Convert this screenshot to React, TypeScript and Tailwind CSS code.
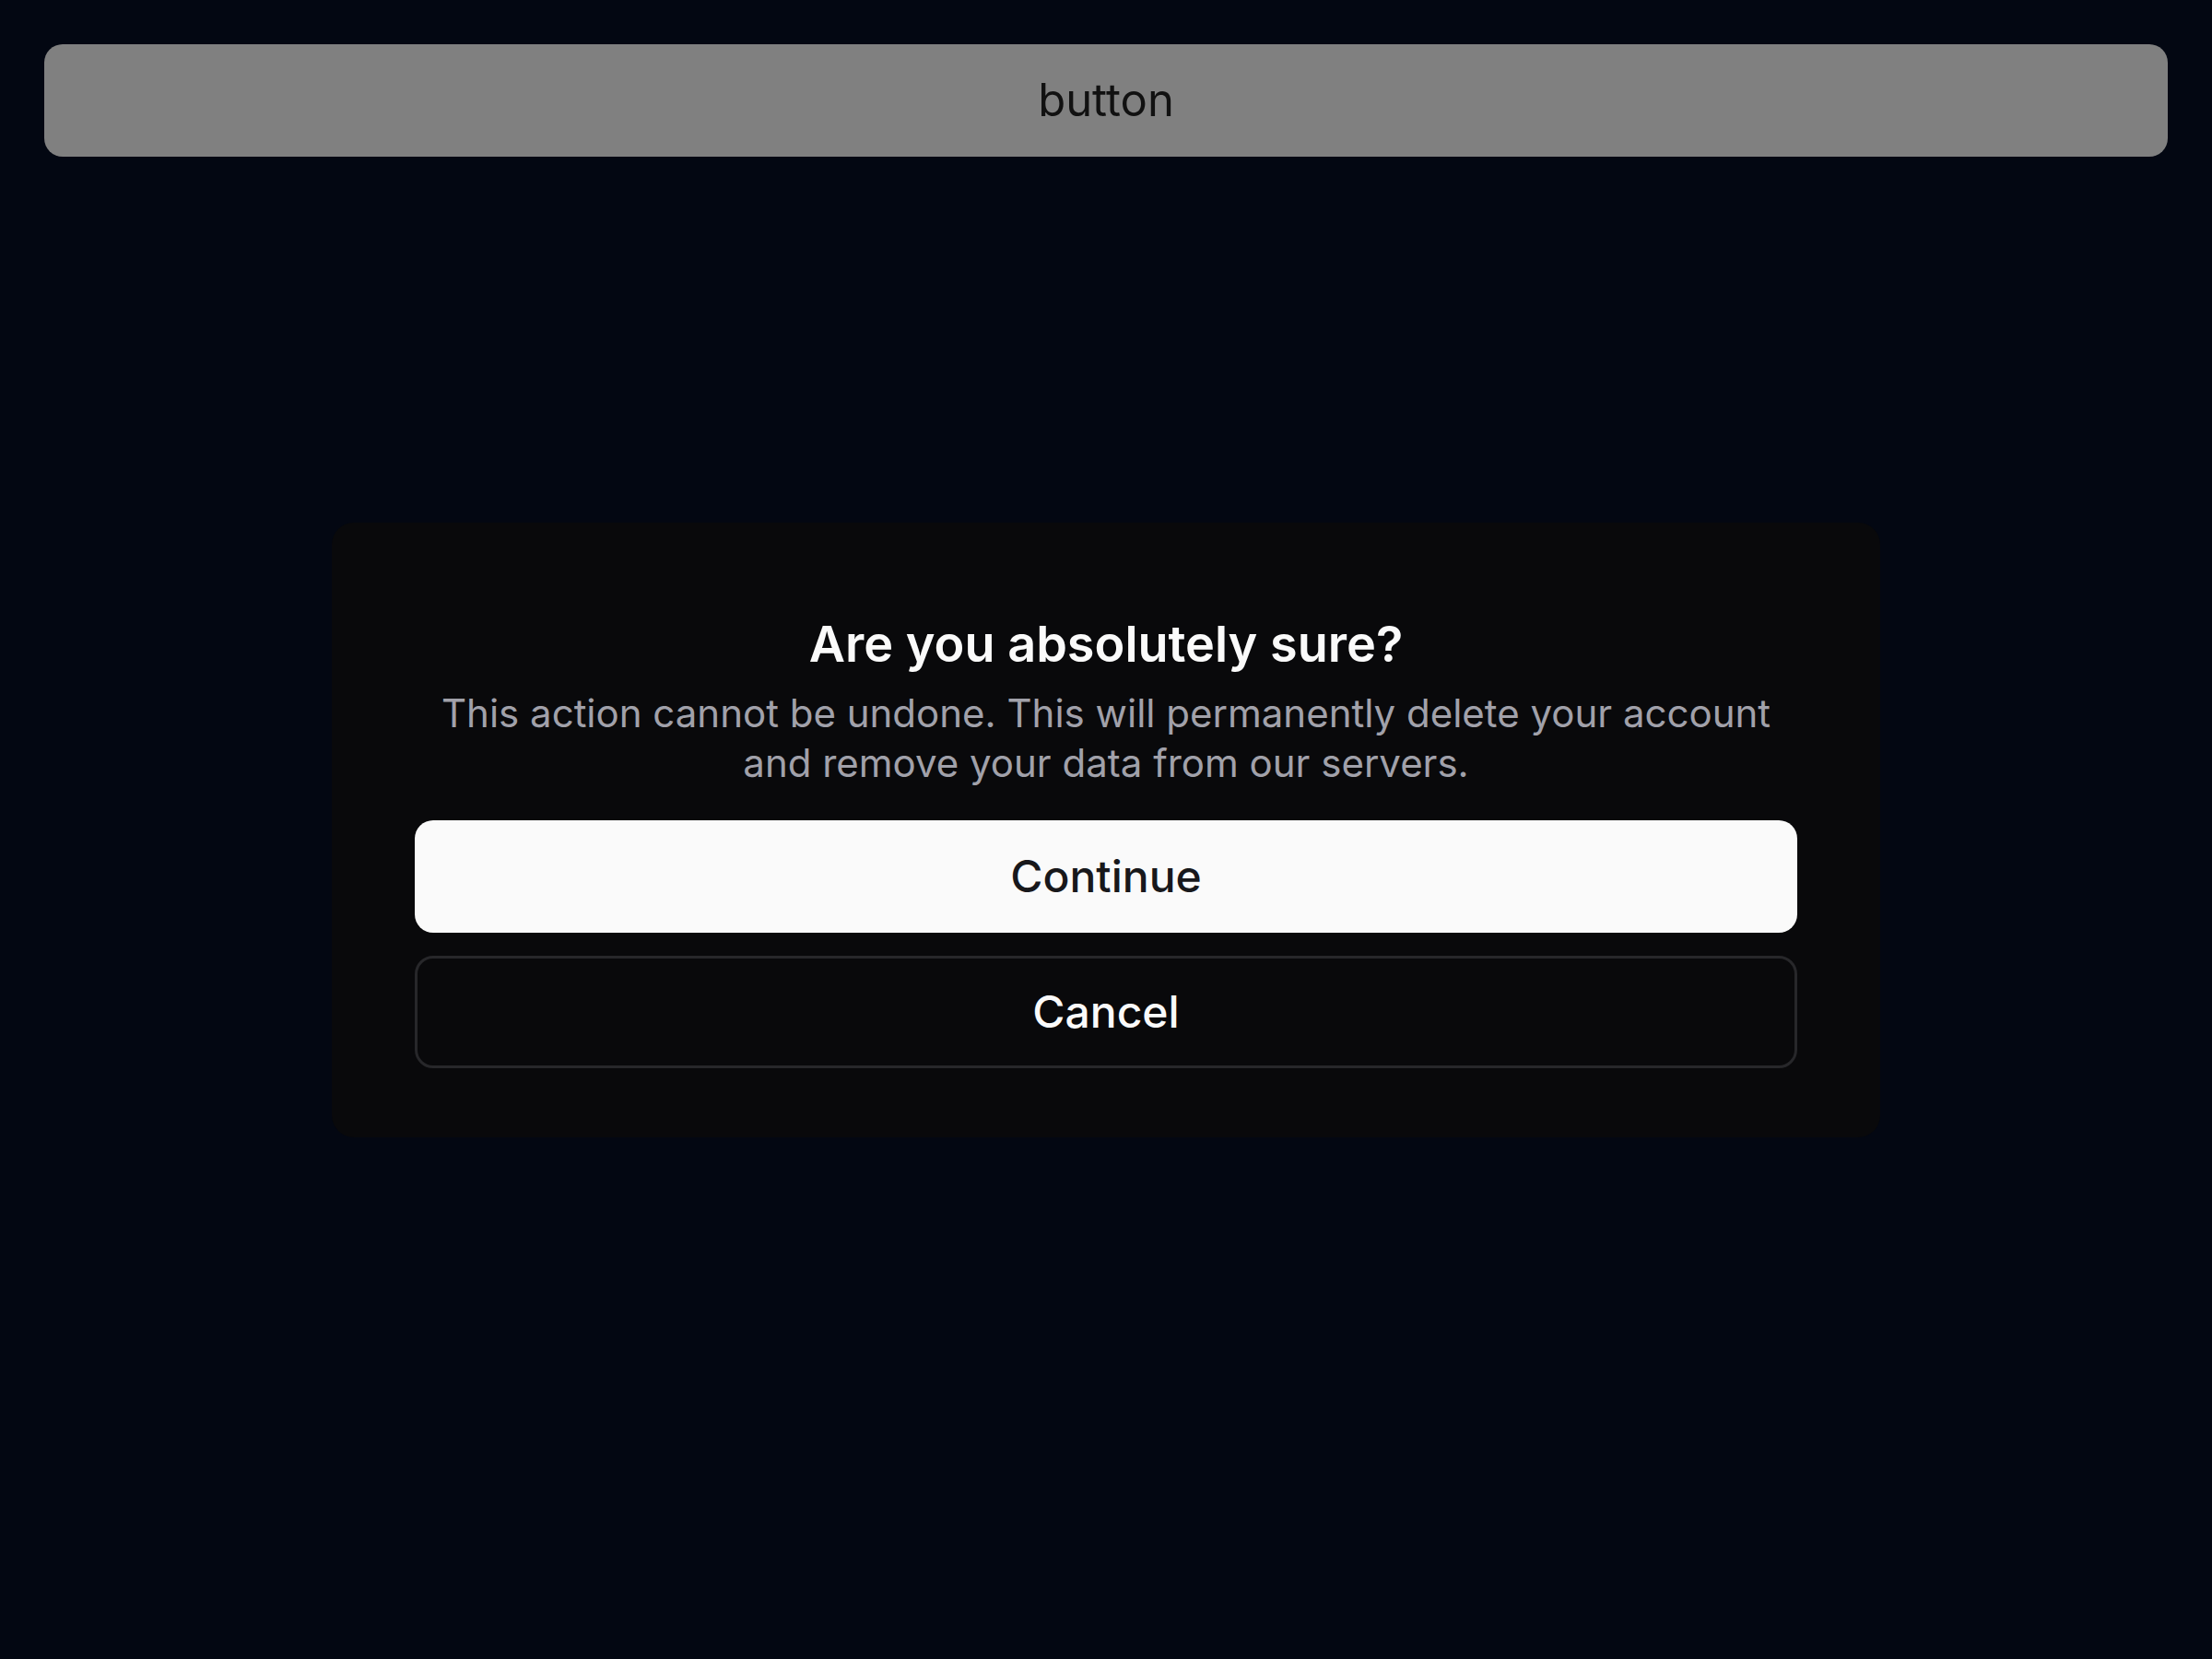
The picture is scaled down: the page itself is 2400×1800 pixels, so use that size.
import { useState } from "react";

function App() {
  const [open, setOpen] = useState(true);

  return (
    <div
      className="relative min-h-screen w-full bg-[#030712] px-[48px] pt-[48px]"
      style={{ fontFamily: "Inter, 'Noto Sans', sans-serif" }}
    >
      <button
        onClick={() => setOpen(true)}
        className="flex h-[122px] w-full items-center justify-center rounded-[20px] bg-[#808080] text-[49px] font-normal text-[#111111]"
      >
        button
      </button>

      {open && (
        <div className="fixed inset-0 flex items-center justify-center">
          <div className="flex w-[1680px] flex-col rounded-[24px] bg-[#09090b] px-[90px] pt-[90px] pb-[75px]">
            <h2 className="text-center text-[54px] leading-[84px] font-semibold text-[#fafafa]">
              Are you absolutely sure?
            </h2>
            <p className="mt-[6px] text-center text-[42px] leading-[54px] text-[#a1a1aa]">
              This action cannot be undone. This will permanently delete your account and remove
              your data from our servers.
            </p>
            <div className="mt-[35px] flex flex-col gap-[25px]">
              <button
                onClick={() => setOpen(false)}
                className="flex h-[122px] w-full items-center justify-center rounded-[20px] bg-[#fafafa] text-[48px] font-medium text-[#18181b]"
              >
                Continue
              </button>
              <button
                onClick={() => setOpen(false)}
                className="flex h-[122px] w-full items-center justify-center rounded-[20px] border-[3px] border-[#27272a] bg-[#09090b] text-[48px] font-medium text-[#fafafa]"
              >
                Cancel
              </button>
            </div>
          </div>
        </div>
      )}
    </div>
  );
}

export default App;
